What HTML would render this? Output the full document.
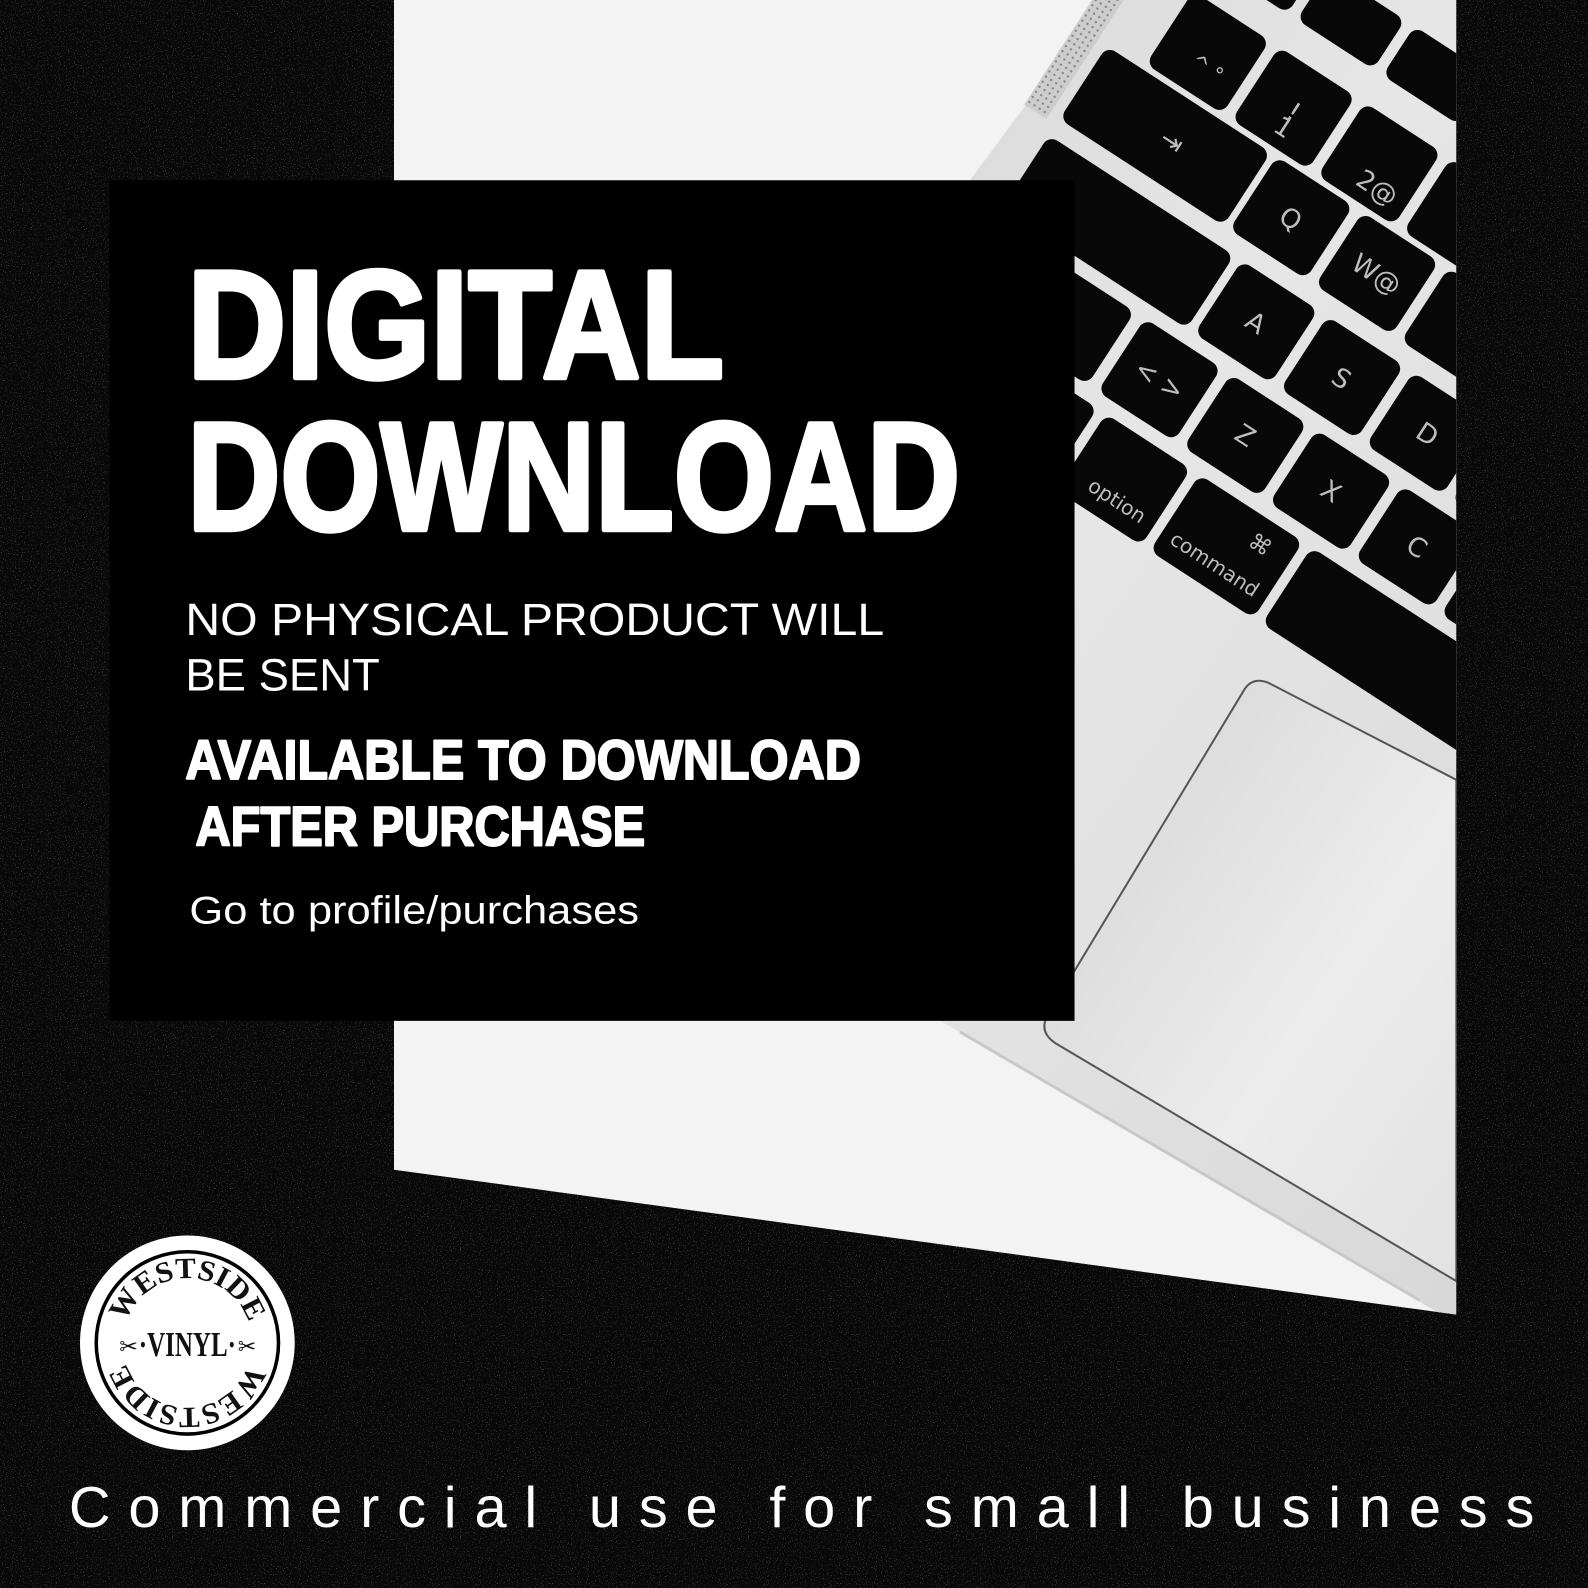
<!DOCTYPE html>
<html><head><meta charset="utf-8"><style>
html,body{margin:0;padding:0;background:#080808;}
svg{display:block;}
</style></head><body>
<svg width="1588" height="1588" viewBox="0 0 1568 1568" xmlns="http://www.w3.org/2000/svg">
<defs>
<filter id="nz" x="0" y="0" width="100%" height="100%">
<feTurbulence type="fractalNoise" baseFrequency="0.9" numOctaves="1" seed="3"/>
<feColorMatrix type="matrix" values="0 0 0 0 1  0 0 0 0 1  0 0 0 0 1  0 0 0 10 -6.2"/>
</filter>
<clipPath id="photo"><polygon points="389,0 1438,0 1438,1298 389,1155"/></clipPath>
<linearGradient id="body" x1="0" y1="0" x2="1" y2="1">
<stop offset="0" stop-color="#cfcfcf"/><stop offset="0.5" stop-color="#e6e6e6"/><stop offset="1" stop-color="#d8d8d8"/>
</linearGradient>
<linearGradient id="pad" x1="0" y1="0" x2="1" y2="1">
<stop offset="0" stop-color="#d2d2d2"/><stop offset="0.6" stop-color="#ececec"/><stop offset="1" stop-color="#e2e2e2"/>
</linearGradient>
<pattern id="dots" width="6" height="6" patternUnits="userSpaceOnUse"><rect width="6" height="6" fill="#cdcdcd"/><circle cx="3" cy="3" r="1.2" fill="#8a8a8a"/></pattern>
<path id="arcTop" d="M 121,1326 A 64,64 0 0 1 249,1326"/>
</defs>
<rect width="1568" height="1568" fill="#080808"/>
<rect width="1568" height="1568" filter="url(#nz)" opacity="0.25"/>

<g clip-path="url(#photo)">
<rect x="389" y="0" width="1049" height="1300" fill="#f3f3f3"/>
<polygon points="1090,0 1438,0 1438,1298 1420,1296 519,768" fill="url(#body)"/>
<g transform="translate(1275,215) rotate(33)">
<rect x="-282" y="-420" width="26" height="470" fill="url(#dots)"/>
<g fill="#080808">
<rect x="-203" y="-225" width="90" height="58" rx="10"/>
<rect x="-102" y="-225" width="90" height="58" rx="10"/>
<rect x="-1" y="-225" width="90" height="58" rx="10"/>
<rect x="100" y="-225" width="90" height="58" rx="10"/>
<rect x="201" y="-225" width="90" height="58" rx="10"/>
<rect x="-203" y="-135" width="90" height="86" rx="10"/>
<rect x="-102" y="-135" width="90" height="86" rx="10"/>
<rect x="-1" y="-135" width="90" height="86" rx="10"/>
<rect x="100" y="-135" width="90" height="86" rx="10"/>
<rect x="201" y="-135" width="90" height="86" rx="10"/>
<rect x="-245" y="-43" width="193" height="86" rx="10"/>
<rect x="-45" y="-43" width="90" height="86" rx="10"/>
<rect x="56" y="-43" width="90" height="86" rx="10"/>
<rect x="157" y="-43" width="90" height="86" rx="10"/>
<rect x="258" y="-43" width="90" height="86" rx="10"/>
<rect x="-245" y="62" width="218" height="86" rx="10"/>
<rect x="-18" y="62" width="90" height="86" rx="10"/>
<rect x="83" y="62" width="90" height="86" rx="10"/>
<rect x="184" y="62" width="90" height="86" rx="10"/>
<rect x="285" y="62" width="90" height="86" rx="10"/>
<rect x="-245" y="162" width="166" height="86" rx="10"/>
<rect x="-67" y="162" width="90" height="86" rx="10"/>
<rect x="34" y="162" width="90" height="86" rx="10"/>
<rect x="135" y="162" width="90" height="86" rx="10"/>
<rect x="236" y="162" width="90" height="86" rx="10"/>
<rect x="337" y="162" width="90" height="86" rx="10"/>
<rect x="-245" y="262" width="85" height="90" rx="10"/>
<rect x="-150" y="262" width="92" height="90" rx="10"/>
<rect x="-48" y="262" width="100" height="90" rx="10"/>
<rect x="62" y="262" width="122" height="90" rx="10"/>
<rect x="194" y="262" width="500" height="90" rx="10"/>
</g>
<g fill="#bdbdbd" font-family="'DejaVu Sans',sans-serif" font-size="26" text-anchor="middle">
<text x="-55" y="-80">!</text><text x="-55" y="-62">1</text>
<text x="55" y="-62">2@</text>
<text x="-150" y="-72" font-size="20">^ °</text>
<text x="0" y="10">Q</text><text x="101" y="10">W@</text>
<text x="27" y="115">A</text><text x="128" y="115">S</text><text x="229" y="115">D</text>
<text x="-22" y="214">&lt; &gt;</text><text x="79" y="214">Z</text><text x="180" y="214">X</text><text x="281" y="214">C</text>
<text x="-140" y="10">⇥</text>
<text x="8" y="335" font-size="20">option</text>
<text x="123" y="335" font-size="20">command</text>
<text x="150" y="295" font-size="22">⌘</text>
<text x="-85" y="335" font-size="20">control</text>
</g>
</g>
<path d="M1252,674 L1438,770 L1438,1265 L1042,1030 Q1024,1018 1036,1000 L1228,682 Q1236,668 1252,674 Z" fill="url(#pad)" stroke="#555" stroke-width="2"/>
<line x1="948" y1="1019" x2="1402" y2="1284" stroke="#c8c8c8" stroke-width="3"/>
</g>

<rect x="108" y="178" width="953" height="830" fill="#000"/>
<g fill="#fff" font-family="'Liberation Sans',sans-serif">
<g stroke="#fff" stroke-width="5" stroke-linejoin="round">
<text x="185" y="373" font-size="152" font-weight="bold" textLength="530" lengthAdjust="spacingAndGlyphs">DIGITAL</text>
<text x="185" y="523" font-size="152" font-weight="bold" textLength="763" lengthAdjust="spacingAndGlyphs">DOWNLOAD</text>
</g>
<text x="183" y="627" font-size="45" textLength="690" lengthAdjust="spacingAndGlyphs">NO PHYSICAL PRODUCT WILL</text>
<text x="183" y="682" font-size="45" textLength="192" lengthAdjust="spacingAndGlyphs">BE SENT</text>
<g stroke="#fff" stroke-width="2" stroke-linejoin="round">
<text x="183" y="769" font-size="55" font-weight="bold" textLength="667" lengthAdjust="spacingAndGlyphs">AVAILABLE TO DOWNLOAD</text>
<text x="193" y="835" font-size="55" font-weight="bold" textLength="444" lengthAdjust="spacingAndGlyphs">AFTER PURCHASE</text>
</g>
<text x="187" y="912" font-size="38" textLength="444" lengthAdjust="spacingAndGlyphs">Go to profile/purchases</text>
<text x="68" y="1508" font-size="57" textLength="1447" lengthAdjust="spacing">Commercial use for small business</text>
</g>

<circle cx="185" cy="1326" r="106" fill="#fff"/>
<circle cx="185" cy="1326" r="90" fill="none" stroke="#000" stroke-width="3.5"/>
<g font-family="'Liberation Serif',serif" font-weight="bold" font-size="29" fill="#111">
<text text-anchor="middle"><textPath href="#arcTop" startOffset="50%" textLength="160" lengthAdjust="spacingAndGlyphs">WESTSIDE</textPath></text>
<g transform="rotate(180 185 1326)"><text text-anchor="middle"><textPath href="#arcTop" startOffset="50%" textLength="160" lengthAdjust="spacingAndGlyphs">WESTSIDE</textPath></text></g>
<text x="185" y="1339" text-anchor="middle" font-size="34" textLength="96" lengthAdjust="spacingAndGlyphs">·VINYL·</text>
</g>
<text x="127" y="1337" font-family="'DejaVu Sans',sans-serif" font-size="22" fill="#111" text-anchor="middle">✂</text>
<text x="244" y="1337" font-family="'DejaVu Sans',sans-serif" font-size="22" fill="#111" text-anchor="middle">✂</text>
</svg>
</body></html>
